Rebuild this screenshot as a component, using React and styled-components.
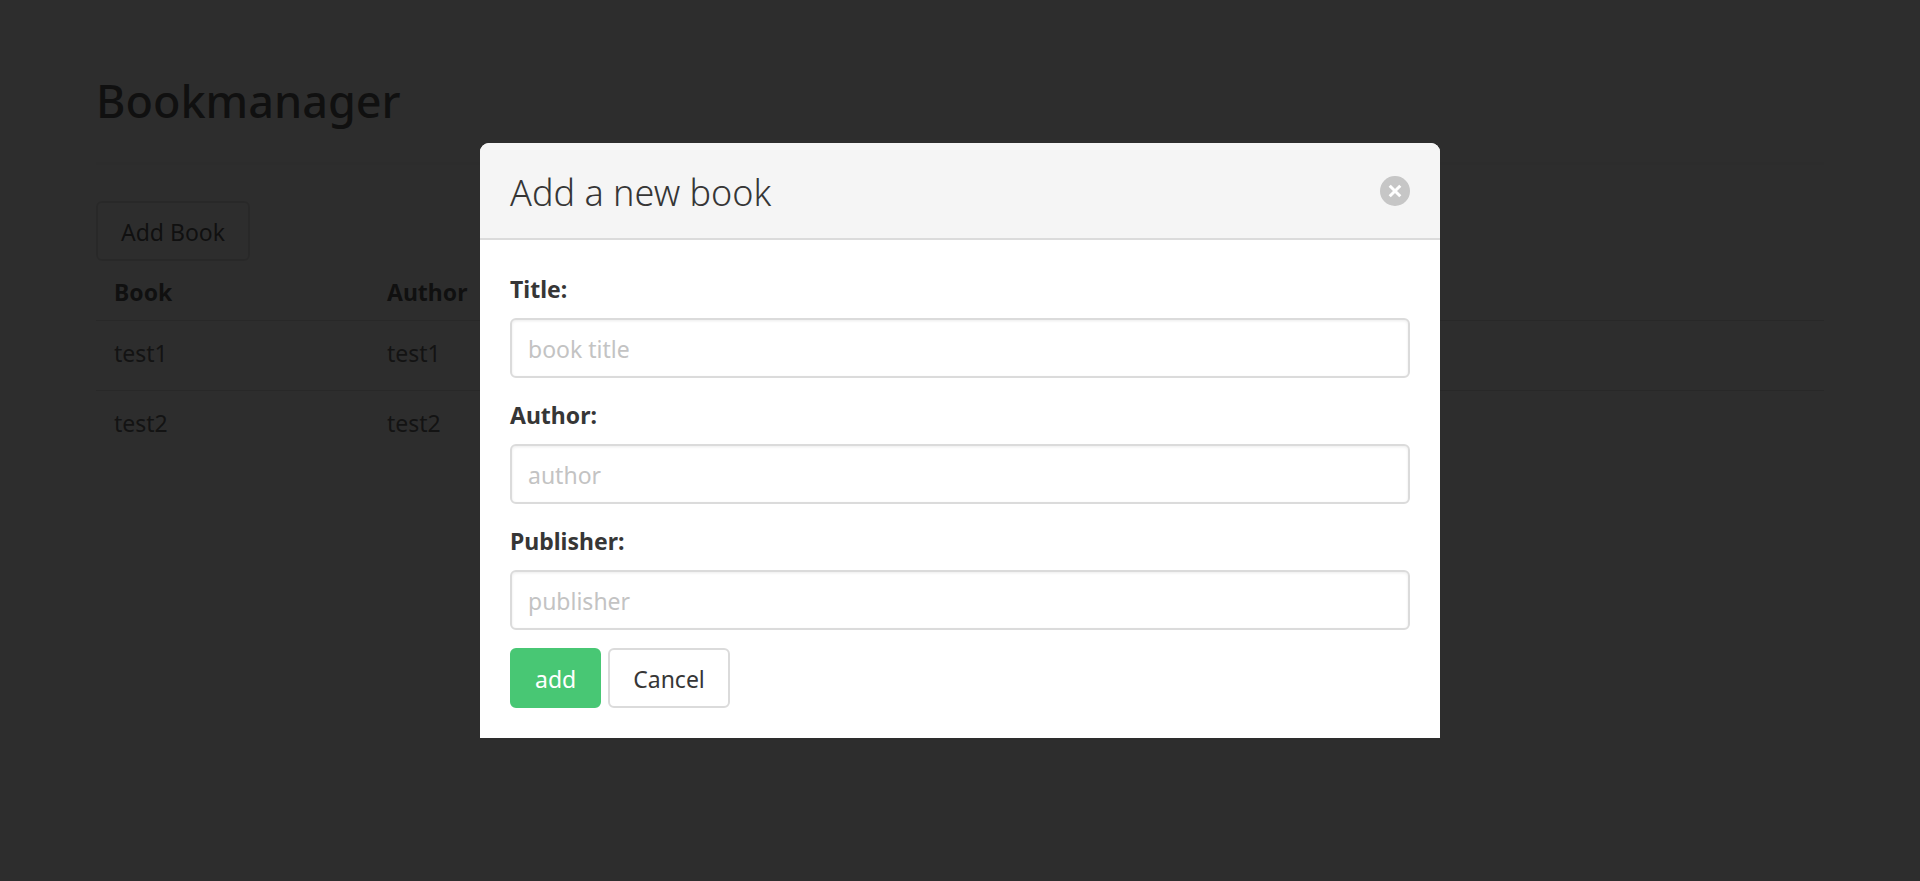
import React, { useState } from "react";
import styled, { createGlobalStyle } from "styled-components";

const GlobalStyle = createGlobalStyle`
  *, *::before, *::after { box-sizing: border-box; }
  body {
    margin: 0;
    background: #fff;
    color: #4a4a4a;
    font: 400 23px/36px "Noto Sans", sans-serif;
  }
`;

const Page = styled.main`
  padding: 74px 96px;
`;

const Heading = styled.h1`
  margin: 0;
  color: #363636;
  font-size: 45px;
  font-weight: 500;
  line-height: 54px;
`;

const Divider = styled.hr`
  height: 3px;
  margin: 34px 0 36px;
  border: 0;
  background: #f5f5f5;
`;

const Button = styled.button`
  height: 60px;
  padding: 2px 23px 0;
  border: 2px solid ${(p) => (p.$primary ? "#48c774" : "#dbdbdb")};
  border-radius: 6px;
  background: ${(p) => (p.$primary ? "#48c774" : "#fff")};
  color: ${(p) => (p.$primary ? "#fff" : "#363636")};
  font: inherit;
  cursor: pointer;
`;

const AddBookButton = styled(Button)`
  display: block;
`;

const Table = styled.table`
  width: 100%;
  border-collapse: separate;
  border-spacing: 0;
`;

const HeaderCell = styled.th`
  width: ${(p) => p.$width || "auto"};
  padding: 13px 18px 10px;
  border-bottom: 1px solid #dbdbdb;
  color: #363636;
  font-weight: 700;
  text-align: left;
`;

const Cell = styled.td`
  padding: 14px 18px 19px;
  border-bottom: 1px solid #dbdbdb;

  tr:last-child > & {
    border-bottom: 0;
  }
`;

const Backdrop = styled.div`
  position: fixed;
  inset: 0;
  display: flex;
  align-items: center;
  justify-content: center;
  background: rgba(10, 10, 10, 0.86);
`;

const Dialog = styled.section`
  width: 960px;
  max-width: 100%;
  max-height: 100%;
  overflow: auto;
  border-radius: 9px 9px 0 0;
  background: #fff;
`;

const DialogHeader = styled.header`
  display: flex;
  align-items: center;
  justify-content: space-between;
  padding: 0 30px;
  border-bottom: 2px solid #dbdbdb;
  background: #f5f5f5;
`;

const DialogTitle = styled.h2`
  margin: 0;
  padding: 32px 0 28px;
  color: #363636;
  font-size: 36px;
  font-weight: 300;
  line-height: 35px;
`;

const CloseButton = styled.button`
  display: flex;
  align-items: center;
  justify-content: center;
  width: 30px;
  height: 30px;
  padding: 0;
  border: 0;
  border-radius: 50%;
  background: rgba(10, 10, 10, 0.2);
  color: #fff;
  cursor: pointer;
`;

const Form = styled.form`
  display: flex;
  flex-direction: column;
  gap: 18px;
  padding: 30px;
`;

const Field = styled.div`
  display: flex;
  flex-direction: column;
  gap: 12px;
`;

const Label = styled.label`
  padding-top: 2px;
  color: #363636;
  font-weight: 700;
  line-height: 34px;
`;

const Input = styled.input`
  width: 100%;
  height: 60px;
  padding: 2px 16px 0;
  border: 2px solid #dbdbdb;
  border-radius: 6px;
  background: #fff;
  box-shadow: inset 0 1px 3px rgba(10, 10, 10, 0.08);
  color: #363636;
  font: inherit;

  &::placeholder {
    color: #c3c3c3;
    opacity: 1;
  }
`;

const Actions = styled.div`
  display: flex;
  gap: 7px;
`;

const fields = [
  { id: "title", label: "Title:", placeholder: "book title" },
  { id: "author", label: "Author:", placeholder: "author" },
  { id: "publisher", label: "Publisher:", placeholder: "publisher" },
];

function AddBookDialog({ onClose, onAdd }) {
  const submit = (event) => {
    event.preventDefault();
    const data = new FormData(event.currentTarget);
    onAdd({ title: data.get("title"), author: data.get("author") });
  };

  return (
    <Backdrop>
      <Dialog role="dialog" aria-modal="true" aria-labelledby="dialog-title">
        <DialogHeader>
          <DialogTitle id="dialog-title">Add a new book</DialogTitle>
          <CloseButton type="button" aria-label="close" onClick={onClose}>
            <svg width="14" height="14" viewBox="0 0 14 14" stroke="currentColor" strokeWidth="3">
              <path d="M1.7 1.7 12.3 12.3M12.3 1.7 1.7 12.3" />
            </svg>
          </CloseButton>
        </DialogHeader>
        <Form onSubmit={submit}>
          {fields.map((field) => (
            <Field key={field.id}>
              <Label htmlFor={field.id}>{field.label}</Label>
              <Input id={field.id} name={field.id} type="text" placeholder={field.placeholder} />
            </Field>
          ))}
          <Actions>
            <Button type="submit" $primary>add</Button>
            <Button type="button" onClick={onClose}>Cancel</Button>
          </Actions>
        </Form>
      </Dialog>
    </Backdrop>
  );
}

export default function App() {
  const [open, setOpen] = useState(true);
  const [books, setBooks] = useState([
    { title: "test1", author: "test1" },
    { title: "test2", author: "test2" },
  ]);

  const addBook = (book) => {
    setBooks([...books, book]);
    setOpen(false);
  };

  return (
    <>
      <GlobalStyle />
      <Page>
        <Heading>Bookmanager</Heading>
        <Divider />
        <AddBookButton type="button" onClick={() => setOpen(true)}>Add Book</AddBookButton>
        <Table>
          <thead>
            <tr>
              <HeaderCell $width="273px">Book</HeaderCell>
              <HeaderCell>Author</HeaderCell>
            </tr>
          </thead>
          <tbody>
            {books.map((book, index) => (
              <tr key={index}>
                <Cell>{book.title}</Cell>
                <Cell>{book.author}</Cell>
              </tr>
            ))}
          </tbody>
        </Table>
      </Page>
      {open && <AddBookDialog onClose={() => setOpen(false)} onAdd={addBook} />}
    </>
  );
}
